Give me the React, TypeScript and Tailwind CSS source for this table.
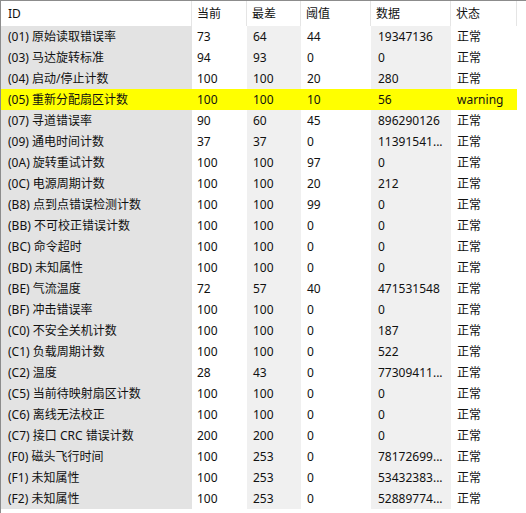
const cols = ["ID", "当前", "最差", "阈值", "数据", "状态"]

type Row = [string, string, string, string, string, string]

const rows: Row[] = [
  ["(01) 原始读取错误率", "73", "64", "44", "19347136", "正常"],
  ["(03) 马达旋转标准", "94", "93", "0", "0", "正常"],
  ["(04) 启动/停止计数", "100", "100", "20", "280", "正常"],
  ["(05) 重新分配扇区计数", "100", "100", "10", "56", "warning"],
  ["(07) 寻道错误率", "90", "60", "45", "896290126", "正常"],
  ["(09) 通电时间计数", "37", "37", "0", "11391541...", "正常"],
  ["(0A) 旋转重试计数", "100", "100", "97", "0", "正常"],
  ["(0C) 电源周期计数", "100", "100", "20", "212", "正常"],
  ["(B8) 点到点错误检测计数", "100", "100", "99", "0", "正常"],
  ["(BB) 不可校正错误计数", "100", "100", "0", "0", "正常"],
  ["(BC) 命令超时", "100", "100", "0", "0", "正常"],
  ["(BD) 未知属性", "100", "100", "0", "0", "正常"],
  ["(BE) 气流温度", "72", "57", "40", "471531548", "正常"],
  ["(BF) 冲击错误率", "100", "100", "0", "0", "正常"],
  ["(C0) 不安全关机计数", "100", "100", "0", "187", "正常"],
  ["(C1) 负载周期计数", "100", "100", "0", "522", "正常"],
  ["(C2) 温度", "28", "43", "0", "77309411...", "正常"],
  ["(C5) 当前待映射扇区计数", "100", "100", "0", "0", "正常"],
  ["(C6) 离线无法校正", "100", "100", "0", "0", "正常"],
  ["(C7) 接口 CRC 错误计数", "200", "200", "0", "0", "正常"],
  ["(F0) 磁头飞行时间", "100", "253", "0", "78172699...", "正常"],
  ["(F1) 未知属性", "100", "253", "0", "53432383...", "正常"],
  ["(F2) 未知属性", "100", "253", "0", "52889774...", "正常"],
]

// column background stripes (list view look)
const colBg = ["bg-[#e3e3e3]", "", "bg-[#f0f0f0]", "", "bg-[#f0f0f0]", ""]
const pad = ["pl-[7px]", "pl-[5px]", "pl-[6px]", "pl-[6px]", "pl-[7px]", "pl-[6px]"]

export default function App() {
  return (
    <div
      className="w-[526px] h-[513px] bg-white border-l border-t border-[#8c8c8c] text-[12px] text-[#111] overflow-hidden"
      style={{ fontFamily: '"Noto Sans", "Noto Sans CJK SC", sans-serif' }}
    >
      <div className="w-[516px]">
        {/* Header */}
        <div className="grid grid-cols-[191px_55px_54px_70px_80px_66px] h-[25px]">
          {cols.map((c, i) => (
            <div
              key={c}
              className={`flex items-center border-r border-[#e5e5e5] ${i === 0 ? "pl-[7px]" : "pl-[5px]"}`}
            >
              {c}
            </div>
          ))}
        </div>

        {/* Body */}
        {rows.map((r) => {
          const warn = r[5] === "warning"
          return (
            <div
              key={r[0]}
              className={`grid grid-cols-[191px_55px_54px_70px_80px_66px] h-[21px] ${warn ? "bg-[#ffff00]" : ""}`}
            >
              {r.map((cell, i) => (
                <div
                  key={i}
                  className={`flex items-center whitespace-nowrap overflow-hidden ${pad[i]} ${warn ? "" : colBg[i]}`}
                >
                  {cell}
                </div>
              ))}
            </div>
          )
        })}
      </div>
    </div>
  )
}
